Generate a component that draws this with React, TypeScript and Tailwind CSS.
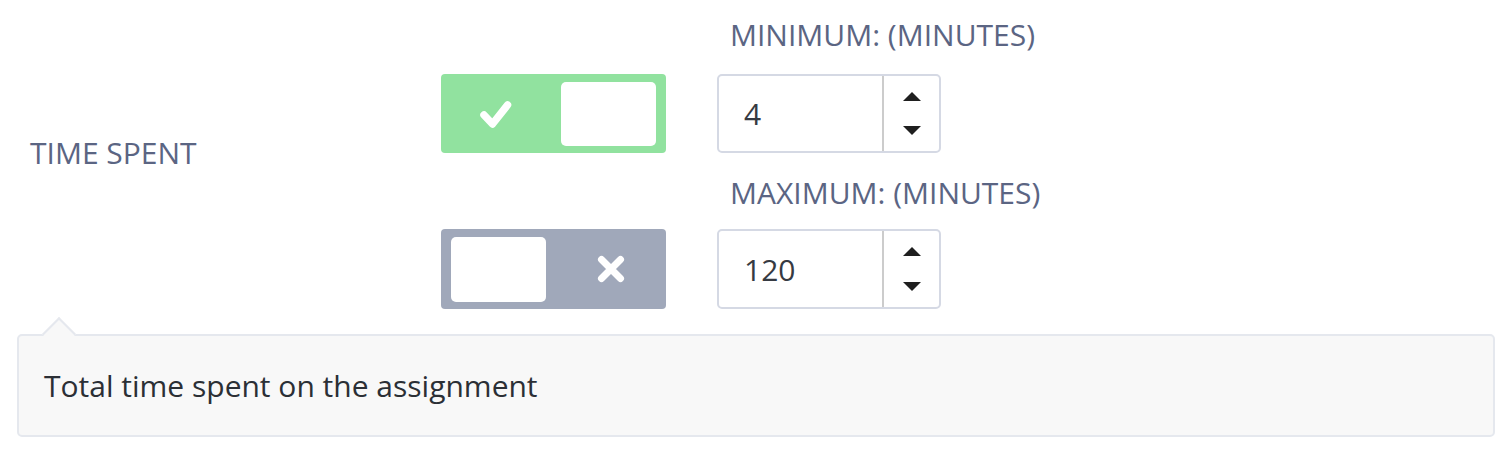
import React from "react";

function Check() {
  return (
    <svg width="34" height="30" viewBox="0 0 34 30">
      <path d="M5 16 L13.5 25 L28.5 6" fill="none" stroke="#fff" strokeWidth="7.5" strokeLinecap="round" strokeLinejoin="round" />
    </svg>
  );
}

function Cross() {
  return (
    <svg width="28" height="28" viewBox="0 0 28 28">
      <path d="M4.5 4.5 L23.5 23.5 M23.5 4.5 L4.5 23.5" fill="none" stroke="#fff" strokeWidth="7" strokeLinecap="round" />
    </svg>
  );
}

function Toggle({ on }: { on: boolean }) {
  if (on) {
    return (
      <div className="w-[225px] h-[79px] rounded-[4px] bg-[#91e29f] flex items-center pr-[10px]">
        <div className="flex-1 flex items-center justify-center pr-[10px]">
          <Check />
        </div>
        <div className="w-[95px] h-[64px] bg-white rounded-[5px]" />
      </div>
    );
  }
  return (
    <div className="w-[225px] h-[80px] rounded-[4px] bg-[#a0a8ba] flex items-center pl-[10px]">
      <div className="w-[95px] h-[65px] bg-white rounded-[5px]" />
      <div className="flex-1 flex items-center justify-center pl-[10px]">
        <Cross />
      </div>
    </div>
  );
}

function NumberInput({ value, h }: { value: string; h: string }) {
  return (
    <div className={`w-[224px] ${h} border-2 border-[#d5d9e4] rounded-[5px] flex bg-white`}>
      <div className="flex-1 flex items-center pl-[25px] text-[30px] text-[#363a42]">{value}</div>
      <div className="w-[57px] border-l-2 border-[#cccccc] flex flex-col items-center justify-between py-[16px]">
        <svg width="18" height="9" viewBox="0 0 18 9"><path d="M9 0 L18 9 L0 9 Z" fill="#1f1f1f" /></svg>
        <svg width="18" height="9" viewBox="0 0 18 9"><path d="M0 0 L18 0 L9 9 Z" fill="#1f1f1f" /></svg>
      </div>
    </div>
  );
}

export default function App() {
  return (
    <div className="w-[1512px] h-[462px] bg-white" style={{ fontFamily: '"Open Sans", sans-serif' }}>
      <div className="flex pt-[15px]">
        <div className="w-[441px] pl-[30px] pt-[118px]">
          <span className="block text-[30px] text-[#5b6583] leading-[40px]">TIME SPENT</span>
        </div>
        <div className="flex flex-col">
          <div className="flex items-end gap-[51px]">
            <Toggle on={true} />
            <div className="flex flex-col">
              <div className="pl-[13px] text-[30px] leading-[40px] text-[#5b6583] mb-[19px]">MINIMUM: (MINUTES)</div>
              <NumberInput value="4" h="h-[79px]" />
            </div>
          </div>
          <div className="flex items-end gap-[51px] mt-[20px]">
            <Toggle on={false} />
            <div className="flex flex-col">
              <div className="pl-[13px] text-[30px] leading-[40px] text-[#5b6583] mb-[16px]">MAXIMUM: (MINUTES)</div>
              <NumberInput value="120" h="h-[80px]" />
            </div>
          </div>
        </div>
      </div>
      <div className="relative mx-[17px] mt-[25px] h-[103px] bg-[#f8f8f8] border-2 border-[#e5e8ee] rounded-[5px] flex items-center pl-[25px]">
        <div className="absolute left-[28px] top-[-14px] w-[24px] h-[24px] bg-[#f8f8f8] border-l-2 border-t-2 border-[#e5e8ee] rotate-45" />
        <span className="relative text-[30px] text-[#2b2f35]">Total time spent on the assignment</span>
      </div>
    </div>
  );
}
